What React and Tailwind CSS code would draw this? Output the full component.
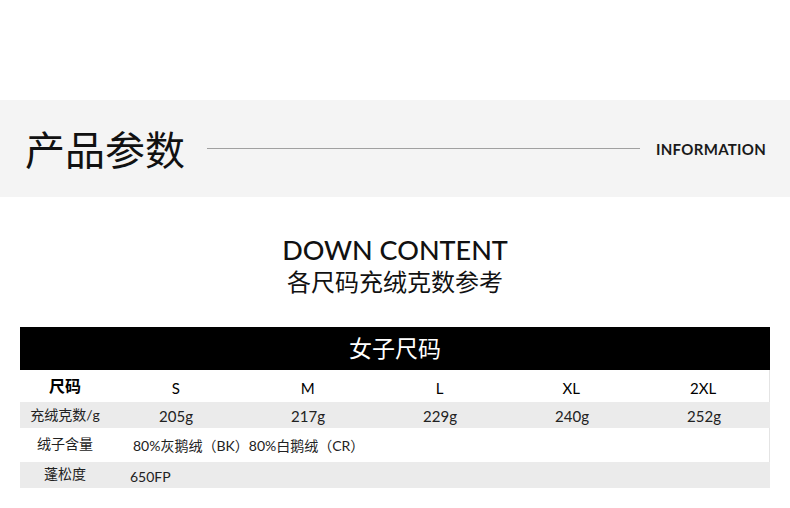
const FONT = "font-['Lato','Noto_Sans_CJK_SC',sans-serif]";

const SIZES = ['S', 'M', 'L', 'XL', '2XL'];
const WEIGHTS = ['205g', '217g', '229g', '240g', '252g'];

export default function App() {
  return (
    <div className={`w-[790px] h-[508px] bg-white text-black ${FONT}`}>
      <div className="h-[100px]" />

      {/* 产品参数 */}
      <div className="h-[97px] bg-[#f4f4f4] flex items-center pl-[25px]">
        <h1 className="text-[40px] leading-none font-normal text-[#111] font-['Noto_Sans_CJK_SC',sans-serif] -mt-[2px]">
          产品参数
        </h1>
        <div className="ml-[22px] w-[433px] h-px bg-[#a0a0a0]" />
        <span className="ml-[16px] text-[15px] font-bold tracking-[0.3px] text-[#1a1a1a] mt-[2px]">INFORMATION</span>
      </div>

      {/* 标题 */}
      <div className="pt-[38px] flex flex-col items-center">
        <p className="text-[27px] leading-[30px] font-medium text-[#111]">DOWN CONTENT</p>
        <p className="mt-[2px] text-[24px] leading-[28px] text-[#111] font-['Noto_Sans_CJK_SC',sans-serif]">
          各尺码充绒克数参考
        </p>
      </div>

      {/* 表格 */}
      <div className="mx-[20px] mt-[32px]">
        <div className="h-[43px] bg-black flex items-center justify-center">
          <span className="text-white text-[23px] leading-none font-['Noto_Sans_CJK_SC',sans-serif] -mt-[2px]">女子尺码</span>
        </div>

        <div className="grid grid-cols-[90px_repeat(5,1fr)] h-[32px] items-center border-r border-[#e4e4e4]">
          <span className="text-center text-[16px] font-bold font-['Noto_Sans_CJK_SC',sans-serif] -mt-[2px]">尺码</span>
          {SIZES.map((s) => (
            <span key={s} className="text-center text-[15px] pt-[5px]">{s}</span>
          ))}
        </div>

        <div className="grid grid-cols-[90px_repeat(5,1fr)] h-[26px] items-center bg-[#ebebeb]">
          <span className="text-center text-[14px] text-[#222] -mt-[2px]">充绒克数/g</span>
          {WEIGHTS.map((w) => (
            <span key={w} className="text-center text-[15px] text-[#222] pt-[2px]">{w}</span>
          ))}
        </div>

        <div className="grid grid-cols-[90px_1fr] h-[34px] items-center border-r border-[#e4e4e4]">
          <span className="text-center text-[14px] text-[#222] -mt-[3px]">绒子含量</span>
          <span className="pl-[23px] text-[14px] text-[#222]">80%灰鹅绒（BK）80%白鹅绒（CR）</span>
        </div>

        <div className="grid grid-cols-[90px_1fr] h-[26px] items-center bg-[#ebebeb]">
          <span className="text-center text-[14px] text-[#222] -mt-[3px]">蓬松度</span>
          <span className="pl-[20px] text-[14px] text-[#222] pt-[3px]">650FP</span>
        </div>
      </div>
    </div>
  );
}
